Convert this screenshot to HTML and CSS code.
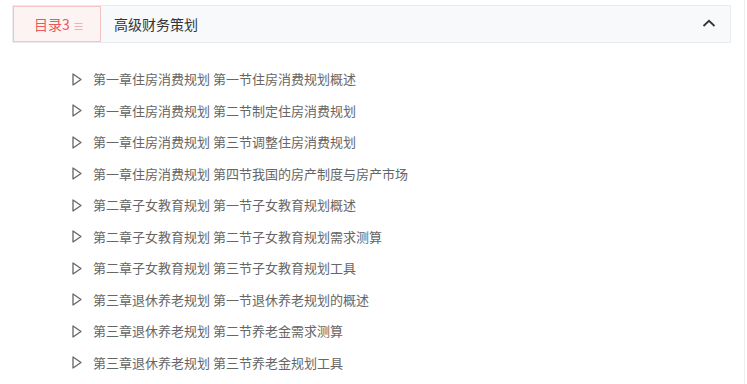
FILE: index.html
```html
<!DOCTYPE html>
<html lang="zh-CN">
<head>
    <meta charset="UTF-8">
    <title>目录</title>
    <link rel="stylesheet" href="styles.css">
</head>
<body>
    <div class="pagina">
        <div class="cabecera">
            <div class="pestana">目录3 <span class="menu-icono">≡</span></div>
            <div class="titulo">高级财务策划</div>
            <svg class="flecha" width="14" height="8" viewBox="0 0 14 8">
                <polyline points="1.5,7 7,1.8 12.5,7" fill="none" stroke="#333" stroke-width="1.8"/>
            </svg>
        </div>

        <ul class="lista">
            <li><svg class="tri" width="10" height="13" viewBox="0 0 10 13"><polygon points="1,1 9,6.5 1,12" fill="none" stroke="#666" stroke-width="1.3" stroke-linejoin="round"/></svg>第一章住房消费规划 第一节住房消费规划概述</li>
            <li><svg class="tri" width="10" height="13" viewBox="0 0 10 13"><polygon points="1,1 9,6.5 1,12" fill="none" stroke="#666" stroke-width="1.3" stroke-linejoin="round"/></svg>第一章住房消费规划 第二节制定住房消费规划</li>
            <li><svg class="tri" width="10" height="13" viewBox="0 0 10 13"><polygon points="1,1 9,6.5 1,12" fill="none" stroke="#666" stroke-width="1.3" stroke-linejoin="round"/></svg>第一章住房消费规划 第三节调整住房消费规划</li>
            <li><svg class="tri" width="10" height="13" viewBox="0 0 10 13"><polygon points="1,1 9,6.5 1,12" fill="none" stroke="#666" stroke-width="1.3" stroke-linejoin="round"/></svg>第一章住房消费规划 第四节我国的房产制度与房产市场</li>
            <li><svg class="tri" width="10" height="13" viewBox="0 0 10 13"><polygon points="1,1 9,6.5 1,12" fill="none" stroke="#666" stroke-width="1.3" stroke-linejoin="round"/></svg>第二章子女教育规划 第一节子女教育规划概述</li>
            <li><svg class="tri" width="10" height="13" viewBox="0 0 10 13"><polygon points="1,1 9,6.5 1,12" fill="none" stroke="#666" stroke-width="1.3" stroke-linejoin="round"/></svg>第二章子女教育规划 第二节子女教育规划需求测算</li>
            <li><svg class="tri" width="10" height="13" viewBox="0 0 10 13"><polygon points="1,1 9,6.5 1,12" fill="none" stroke="#666" stroke-width="1.3" stroke-linejoin="round"/></svg>第二章子女教育规划 第三节子女教育规划工具</li>
            <li><svg class="tri" width="10" height="13" viewBox="0 0 10 13"><polygon points="1,1 9,6.5 1,12" fill="none" stroke="#666" stroke-width="1.3" stroke-linejoin="round"/></svg>第三章退休养老规划 第一节退休养老规划的概述</li>
            <li><svg class="tri" width="10" height="13" viewBox="0 0 10 13"><polygon points="1,1 9,6.5 1,12" fill="none" stroke="#666" stroke-width="1.3" stroke-linejoin="round"/></svg>第三章退休养老规划 第二节养老金需求测算</li>
            <li><svg class="tri" width="10" height="13" viewBox="0 0 10 13"><polygon points="1,1 9,6.5 1,12" fill="none" stroke="#666" stroke-width="1.3" stroke-linejoin="round"/></svg>第三章退休养老规划 第三节养老金规划工具</li>
        </ul>
    </div>
</body>
</html>
```

FILE: styles.css
```css
body {
    margin: 0;
    font-family: "Noto Sans CJK SC", "Noto Sans", sans-serif;
    background-color: #fff;
}

.pagina {
    width: 745px;
    height: 384px;
    border-right: 1px solid #eee;
    padding: 5px 0 0 12px;
    box-sizing: border-box;
    overflow: hidden;
}

.cabecera {
    width: 719px;
    height: 38px;
    box-sizing: border-box;
    display: flex;
    align-items: center;
    background-color: #f8f9fb;
    border: 1px solid #e9ebee;
}

.pestana {
    width: 88px;
    height: 36px;
    box-sizing: border-box;
    display: flex;
    align-items: center;
    justify-content: center;
    gap: 3px;
    background-color: #fdf3f3;
    border: 1px solid #f6c3c3;
    color: #e9595b;
    font-size: 14px;
    padding-left: 4px;
}

    .pestana .menu-icono {
        font-size: 11px;
        color: #eba3a3;
        margin-top: 3px;
    }

.titulo {
    flex: 1;
    margin-left: 13px;
    font-size: 14px;
    color: #333;
}

.flecha {
    margin-right: 14px;
    margin-top: -2px;
}

.lista {
    list-style: none;
    margin: 0;
    padding: 20px 0 0 60px;
}

    .lista li {
        height: 31.5px;
        display: flex;
        align-items: center;
        font-size: 13px;
        color: #666;
    }

.tri {
    margin-right: 11px;
    margin-top: 1px;
}
```
